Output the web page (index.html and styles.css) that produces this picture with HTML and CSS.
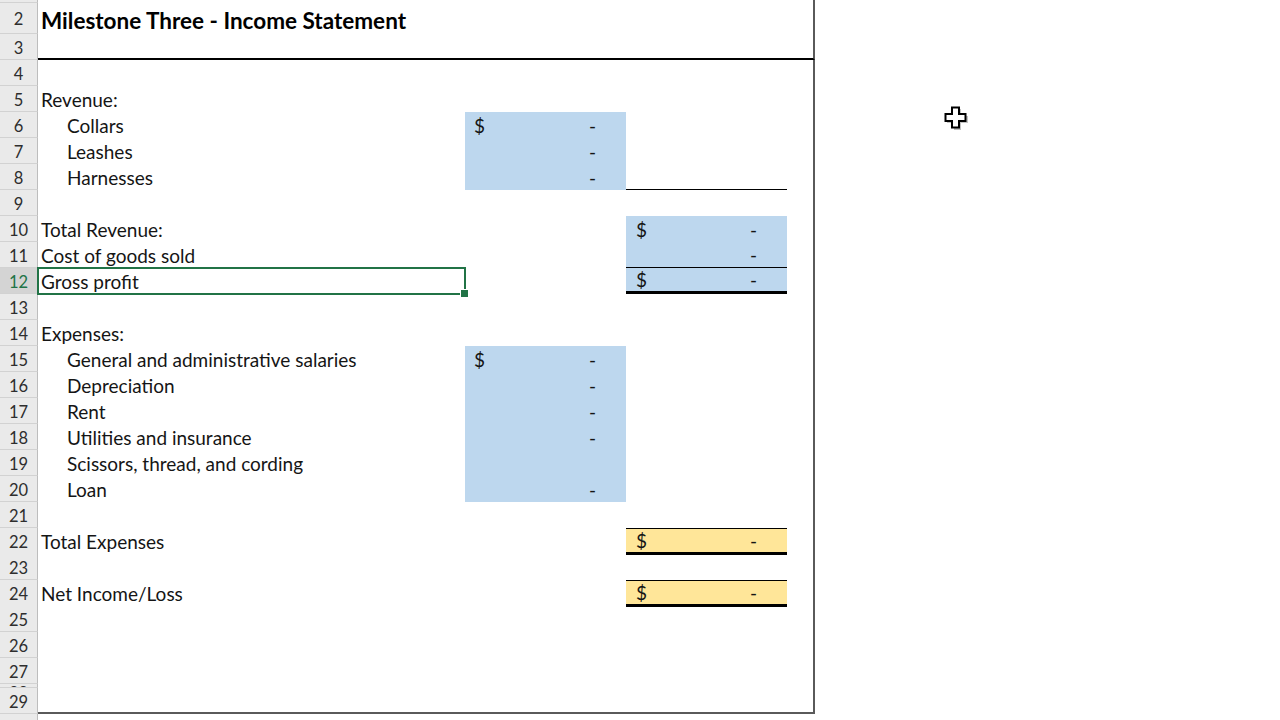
FILE: index.html
```html
<!DOCTYPE html>
<html>
<head>
<meta charset="utf-8">
<link rel="stylesheet" href="styles.css">
</head>
<body>
<div class="sheet">
  <div class="row r1"><div class="rh"></div><div class="a"></div><div class="b"></div><div class="c"></div><div class="d"></div></div>
  <div class="row r2"><div class="rh">2</div><div class="a title">Milestone Three - Income Statement</div><div class="b"></div><div class="c"></div><div class="d"></div></div>
  <div class="row rule"><div class="rh">3</div><div class="a"></div><div class="b"></div><div class="c"></div><div class="d"></div></div>
  <div class="row"><div class="rh">4</div><div class="a"></div><div class="b"></div><div class="c"></div><div class="d"></div></div>
  <div class="row"><div class="rh">5</div><div class="a">Revenue:</div><div class="b"></div><div class="c"></div><div class="d"></div></div>
  <div class="row"><div class="rh">6</div><div class="a ind">Collars</div><div class="b val blue"><span>$</span><span>-</span></div><div class="c"></div><div class="d"></div></div>
  <div class="row"><div class="rh">7</div><div class="a ind">Leashes</div><div class="b val blue"><span></span><span>-</span></div><div class="c"></div><div class="d"></div></div>
  <div class="row"><div class="rh">8</div><div class="a ind">Harnesses</div><div class="b val blue"><span></span><span>-</span></div><div class="c under"></div><div class="d"></div></div>
  <div class="row"><div class="rh">9</div><div class="a"></div><div class="b"></div><div class="c"></div><div class="d"></div></div>
  <div class="row"><div class="rh">10</div><div class="a">Total Revenue:</div><div class="b"></div><div class="c val blue"><span>$</span><span>-</span></div><div class="d"></div></div>
  <div class="row"><div class="rh">11</div><div class="a">Cost of goods sold</div><div class="b"></div><div class="c val blue under"><span></span><span>-</span></div><div class="d"></div></div>
  <div class="row"><div class="rh sel">12</div><div class="a selected">Gross profit</div><div class="b"></div><div class="c val blue total"><span>$</span><span>-</span></div><div class="d"></div></div>
  <div class="row"><div class="rh">13</div><div class="a"></div><div class="b"></div><div class="c"></div><div class="d"></div></div>
  <div class="row"><div class="rh">14</div><div class="a">Expenses:</div><div class="b"></div><div class="c"></div><div class="d"></div></div>
  <div class="row"><div class="rh">15</div><div class="a ind">General and administrative salaries</div><div class="b val blue"><span>$</span><span>-</span></div><div class="c"></div><div class="d"></div></div>
  <div class="row"><div class="rh">16</div><div class="a ind">Depreciation</div><div class="b val blue"><span></span><span>-</span></div><div class="c"></div><div class="d"></div></div>
  <div class="row"><div class="rh">17</div><div class="a ind">Rent</div><div class="b val blue"><span></span><span>-</span></div><div class="c"></div><div class="d"></div></div>
  <div class="row"><div class="rh">18</div><div class="a ind">Utilities and insurance</div><div class="b val blue"><span></span><span>-</span></div><div class="c"></div><div class="d"></div></div>
  <div class="row"><div class="rh">19</div><div class="a ind">Scissors, thread, and cording</div><div class="b val blue"><span></span><span></span></div><div class="c"></div><div class="d"></div></div>
  <div class="row"><div class="rh">20</div><div class="a ind">Loan</div><div class="b val blue"><span></span><span>-</span></div><div class="c"></div><div class="d"></div></div>
  <div class="row"><div class="rh">21</div><div class="a"></div><div class="b"></div><div class="c"></div><div class="d"></div></div>
  <div class="row"><div class="rh">22</div><div class="a">Total Expenses</div><div class="b"></div><div class="c val yellow boxed"><span>$</span><span>-</span></div><div class="d"></div></div>
  <div class="row"><div class="rh">23</div><div class="a"></div><div class="b"></div><div class="c"></div><div class="d"></div></div>
  <div class="row"><div class="rh">24</div><div class="a">Net Income/Loss</div><div class="b"></div><div class="c val yellow boxed"><span>$</span><span>-</span></div><div class="d"></div></div>
  <div class="row"><div class="rh">25</div><div class="a"></div><div class="b"></div><div class="c"></div><div class="d"></div></div>
  <div class="row"><div class="rh">26</div><div class="a"></div><div class="b"></div><div class="c"></div><div class="d"></div></div>
  <div class="row"><div class="rh">27</div><div class="a"></div><div class="b"></div><div class="c"></div><div class="d"></div></div>
  <div class="row r28"><div class="rh">28</div><div class="a"></div><div class="b"></div><div class="c"></div><div class="d"></div></div>
  <div class="row last"><div class="rh">29</div><div class="a"></div><div class="b"></div><div class="c"></div><div class="d"></div></div>
  <div class="row"><div class="rh">30</div></div>
</div>
<svg class="cursor" width="26" height="26" viewBox="0 0 26 26">
  <polygon points="10,3 17,3 17,10 24,10 24,17 17,17 17,24 10,24 10,17 3,17 3,10 10,10" fill="#9a9a9a" opacity="0.6"/>
  <polygon points="8,1.5 15,1.5 15,8 21.5,8 21.5,15 15,15 15,21.5 8,21.5 8,15 1.5,15 1.5,8 8,8" fill="#fff" stroke="#000" stroke-width="2"/>
</svg>
</body>
</html>
```
FILE: styles.css
```css
html, body {
  margin: 0;
  padding: 0;
  background: #fff;
  overflow: hidden;
  width: 1280px;
  height: 720px;
}
body {
  font-family: Lato, "Open Sans", sans-serif;
  font-size: 19px;
  color: #151515;
  position: relative;
}
.sheet {
  display: flex;
  flex-direction: column;
}
.row {
  display: grid;
  grid-template-columns: 38px 427px 161px 161px 28px;
  height: 26px;
}
.row > div {
  box-sizing: border-box;
  display: flex;
  align-items: center;
  white-space: nowrap;
}
.r1 { height: 3px; overflow: hidden; }
.r2 { height: 31px; }
.r28 { height: 4px; overflow: hidden; }
.r28 .rh { align-items: flex-start; line-height: 14px; }
.rh {
  background: #eaeaea;
  border-right: 1px solid #bdbdbd;
  border-bottom: 1px solid #d2d2d2;
  justify-content: center;
  color: #2e2e2e;
  font-size: 16.5px;
  padding-top: 2px;
  overflow: hidden;
}
.rh.sel {
  background: #d4d4d4;
  color: #217346;
}
.a { padding-left: 3px; }
.a.ind { padding-left: 29px; }
.title {
  font-weight: 700;
  font-size: 22.5px;
  padding-top: 3px;
  color: #000;
}
.d { border-right: 2px solid #5a5a5a; }
.rule .a, .rule .b, .rule .c, .rule .d {
  border-bottom: 2px solid #000;
}
.last .a, .last .b, .last .c, .last .d {
  border-bottom: 2px solid #5a5a5a;
}
.val {
  justify-content: space-between;
  padding-left: 9px;
  padding-right: 30px;
}
.c.val { padding-left: 10px; }
.blue { background: #bdd7ee; }
.yellow { background: #ffe699; }
.under { border-bottom: 1px solid #000; }
.total { border-bottom: 3px solid #000; }
.boxed {
  border-top: 1px solid #000;
  border-bottom: 3px solid #000;
}
.selected { position: relative; }
.selected::after {
  content: "";
  position: absolute;
  left: -1px;
  top: -1px;
  right: -1px;
  bottom: -1px;
  border: 2px solid #217346;
}
.selected::before {
  content: "";
  position: absolute;
  right: -4px;
  bottom: -4px;
  width: 7px;
  height: 7px;
  background: #217346;
  border: 1px solid #fff;
  z-index: 2;
}
.cursor {
  position: absolute;
  left: 944px;
  top: 106px;
}
```
